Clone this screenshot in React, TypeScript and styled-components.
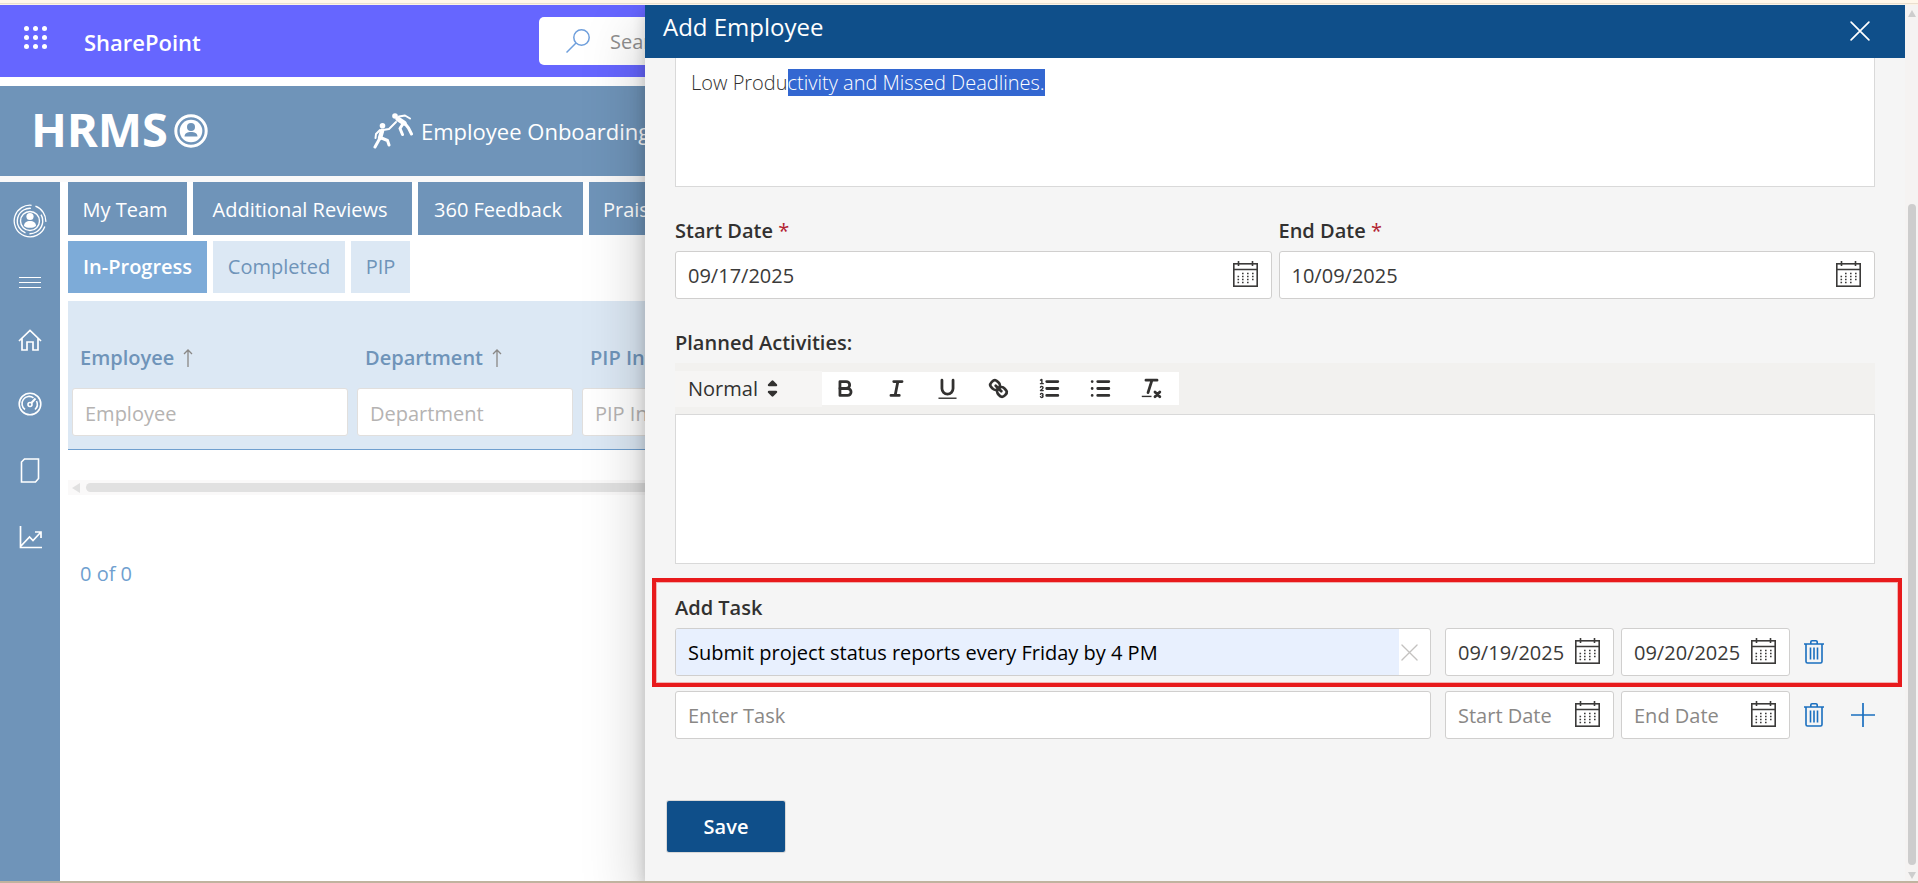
import React from 'react';
import type { ReactNode } from 'react';
import styled, { createGlobalStyle, css } from 'styled-components';

const steel = '#6f94b9';
const navy = '#0f4f8a';
const ink = '#323130';
const azure = '#1a6fbf';

const GlobalStyle = createGlobalStyle`
  *, *::before, *::after { box-sizing: border-box; }
  body { margin: 0; background: #fff; }
  body, button, input, select {
    font-family: "Open Sans", "Noto Sans", sans-serif;
    font-size: 20px;
    line-height: 28px;
    color: ${ink};
  }
  button { background: none; border: 0; padding: 0; cursor: pointer; }
  svg { display: block; flex: none; }
`;

const Frame = styled.div`
  display: flex;
  flex-direction: column;
  min-height: 100vh;
  overflow: hidden;
`;
const TopStrip = styled.div`
  height: 5px;
  background: linear-gradient(#fff7ea 3px, #eadfcf 3px, #eadfcf 4px, #fbf3e6 4px);
`;
const BottomStrip = styled.div`
  height: 2px;
  background: #c0b39f;
`;
const Workspace = styled.div`
  position: relative;
  flex: 1;
  display: flex;
  flex-direction: column;
`;

/* ---------- page behind the drawer ---------- */
const SuiteBar = styled.header`
  display: flex;
  align-items: center;
  height: 72px;
  padding: 0 24px;
  background: #6666ff;
`;
const Waffle = styled.button`
  display: flex;
  align-items: center;
  height: 40px;
  padding-bottom: 6px;
`;
const SuiteName = styled.a`
  flex: 0 0 455px;
  margin-left: 36px;
  padding-top: 2px;
  font-size: 22px;
  font-weight: 600;
  color: #fff;
  text-decoration: none;
`;
const SearchBox = styled.label`
  flex: 1;
  max-width: 840px;
  display: flex;
  align-items: center;
  gap: 20px;
  height: 48px;
  padding: 0 27px;
  border-radius: 5px;
  background: #fff;
  input {
    flex: 1;
    padding: 2px 0 0;
    border: 0;
    outline: 0;
    background: none;
  }
  input::placeholder { color: #8f8f8f; opacity: 1; }
`;
const SiteHeader = styled.div`
  display: flex;
  align-items: center;
  height: 90px;
  margin-top: 9px;
  padding: 0 31px;
  background: ${steel};
  color: #fff;
`;
const Logo = styled.a`
  flex: 0 0 342px;
  display: flex;
  align-items: center;
  gap: 6px;
  color: #fff;
  font-family: "Noto Sans", "Open Sans", sans-serif;
  font-size: 47px;
  line-height: 60px;
  font-weight: 700;
  text-decoration: none;
  span { padding-bottom: 4px; }
`;
const HeaderLink = styled.a`
  display: flex;
  align-items: center;
  gap: 8px;
  font-size: 22px;
  color: #fff;
  text-decoration: none;
  white-space: nowrap;
`;
const Below = styled.div`
  flex: 1;
  display: flex;
  border-top: 6px solid #faf9f9;
`;
const SideBar = styled.nav`
  flex: 0 0 60px;
  display: flex;
  flex-direction: column;
  padding-top: 6px;
  background: ${steel};
`;
const SideItem = styled.button<{ $height: number }>`
  display: flex;
  align-items: center;
  justify-content: center;
  height: ${(p) => p.$height}px;
  color: #fff;
`;
const Content = styled.main`
  flex: 1;
  min-width: 0;
  padding-left: 8px;
`;
const TabRow = styled.div`
  display: flex;
  gap: 6px;
  margin-bottom: 6px;
`;
const Tab = styled.button<{ $width: number }>`
  width: ${(p) => p.$width}px;
  height: 53px;
  padding: 2px 5px 0 0;
  background: ${steel};
  color: #fff;
  white-space: nowrap;
`;
const SubTab = styled(Tab)<{ $active?: boolean }>`
  height: 52px;
  padding: 0;
  background: ${(p) => (p.$active ? '#7dabd8' : '#dce8f4')};
  color: ${(p) => (p.$active ? '#fff' : steel)};
  font-weight: ${(p) => (p.$active ? 600 : 400)};
`;
const Grid = styled.table`
  width: 100%;
  margin-top: 8px;
  border-collapse: separate;
  border-spacing: 0;
  table-layout: fixed;
  background: #dce8f4;
  th {
    height: 149px;
    padding: 0 5px 13px 4px;
    vertical-align: bottom;
    border-bottom: 1px solid #6f9fcf;
    text-align: left;
    font-weight: 600;
    color: ${steel};
  }
`;
const HeadLabel = styled.label`
  display: flex;
  align-items: center;
  gap: 9px;
  padding: 0 8px;
  margin-bottom: 16px;
  white-space: nowrap;
`;
const FilterInput = styled.input`
  display: block;
  width: 100%;
  height: 48px;
  padding: 2px 12px 0;
  border: 1px solid #e1dfdd;
  border-radius: 3px;
  background: #fff;
  &::placeholder { color: #b5b3b2; opacity: 1; }
`;
const HScroll = styled.div`
  display: flex;
  align-items: center;
  gap: 6px;
  height: 15px;
  margin-top: 30px;
  padding-left: 4px;
  background: #faf9f9;
`;
const HThumb = styled.div`
  flex: 1;
  height: 9px;
  border-radius: 5px;
  background: #e1e1e1;
`;
const Count = styled.p`
  margin: 65px 12px 0;
  color: #6f9fcf;
`;

/* ---------- drawer ---------- */
const Drawer = styled.section`
  position: absolute;
  inset: 0 0 0 645px;
  display: flex;
  background: #f5f5f5;
  box-shadow: 0 26px 58px rgba(0, 0, 0, 0.22), 0 5px 14px rgba(0, 0, 0, 0.18);
  clip-path: inset(0 0 0 -140px);
`;
const DrawerMain = styled.div`
  flex: 1;
  min-width: 0;
  display: flex;
  flex-direction: column;
`;
const DrawerHead = styled.header`
  display: flex;
  align-items: center;
  justify-content: space-between;
  height: 53px;
  padding: 0 35px 2px 18px;
  background: ${navy};
  color: #fff;
  h2 {
    margin: 0;
    padding-bottom: 8px;
    font-size: 24px;
    font-weight: 400;
  }
  button { color: #fff; }
`;
const Form = styled.form`
  display: flex;
  flex-direction: column;
  gap: 29px;
  padding: 0 30px;
`;
const Field = styled.div`
  display: flex;
  flex-direction: column;
  gap: 5px;
  min-width: 0;
`;
const Label = styled.label`
  line-height: 30px;
  font-weight: 600;
  span { color: #b22230; font-weight: 400; }
`;
const TextArea = styled.div<{ $joined?: boolean }>`
  height: ${(p) => (p.$joined ? 150 : 129)}px;
  padding: 11px 15px;
  border: 1px solid #d9d9d9;
  ${(p) => !p.$joined && css`border-top: 0;`}
  background: #fff;
  font-weight: 300;
  outline: 0;
  mark { background: #3367d1; color: #fff; }
`;
const DatePair = styled.div`
  display: grid;
  grid-template-columns: 1fr 1fr;
  gap: 7px;
`;
const InputBox = styled.div<{ $padRight?: number }>`
  display: flex;
  align-items: center;
  height: 48px;
  padding-right: ${(p) => p.$padRight ?? 13}px;
  border: 1px solid #d0cfce;
  border-radius: 3px;
  background: #fff;
  overflow: hidden;
`;
const TextInput = styled.input<{ $filled?: boolean }>`
  flex: 1;
  min-width: 0;
  height: 100%;
  padding: 0 0 0 12px;
  border: 0;
  outline: 0;
  background: ${(p) => (p.$filled ? '#e8f0fe' : 'transparent')};
  color: ${(p) => (p.$filled ? '#000' : '#3b3a39')};
  &::placeholder { color: #8a8886; opacity: 1; }
`;
const CalendarButton = styled.button`
  padding-bottom: 2px;
`;
const Toolbar = styled.div`
  display: flex;
  align-items: center;
  height: 51px;
  background: #f2f1ef;
`;
const FormatPicker = styled.div`
  display: flex;
  align-items: center;
  width: 147px;
  height: 36px;
  padding-left: 13px;
  background: #f6f5f4;
  select {
    appearance: none;
    width: 72px;
    padding: 0;
    border: 0;
    background: none;
    outline: 0;
    font-weight: 500;
  }
`;
const ToolGroup = styled.div`
  display: flex;
  height: 33px;
  background: #fff;
  button {
    display: flex;
    align-items: center;
    justify-content: center;
    width: 51px;
    padding-right: 4px;
  }
`;
const Editor = styled.div`
  display: flex;
  flex-direction: column;
`;
const Tasks = styled.div`
  display: flex;
  flex-direction: column;
  gap: 15px;
`;
const TaskField = styled(Field)`
  position: relative;
`;
const Highlight = styled.div`
  position: absolute;
  inset: -15px -27px -11px -23px;
  border: 4px solid #e81a1c;
  box-shadow: inset 0 0 0 1px rgba(232, 26, 28, 0.3);
  pointer-events: none;
`;
const TaskLine = styled.div`
  display: flex;
  align-items: center;
  gap: 14px;
  > :first-child { flex: 1; }
`;
const TaskDates = styled.div`
  display: grid;
  grid-template-columns: 169px 169px;
  gap: 7px;
`;
const Actions = styled.div`
  display: flex;
  align-items: center;
  gap: 27px;
  width: 71px;
  button { color: ${azure}; }
`;
const ClearButton = styled.button`
  margin-left: 2px;
  color: #c4c2c0;
`;
const Footer = styled.footer`
  padding: 62px 22px 28px;
`;
const SaveButton = styled.button`
  width: 118px;
  height: 51px;
  border-radius: 2px;
  background: ${navy};
  color: #fff;
  font-weight: 600;
  box-shadow: 0 0 0 1px #d8d8d8;
`;
const VScroll = styled.div`
  flex: 0 0 13px;
  display: flex;
  flex-direction: column;
  align-items: center;
  gap: 7px;
  padding: 5px 0 2px;
  background: #f5f3f2;
`;
const VTrack = styled.div`
  flex: 1;
  display: flex;
  padding-top: 180px;
`;
const VThumb = styled.div`
  width: 8px;
  border-radius: 4px;
  background: #cdcdcd;
`;

/* ---------- icons ---------- */
const CalendarIcon = () => (
  <svg width="25" height="26" viewBox="0 0 25 26" fill="none" stroke="#3b3a39">
    <rect x="0.800" y="2.800" width="23.400" height="22.400" strokeWidth="1.600" />
    <path d="M1 8.500h23M5.500 0v5M19.500 0v5" strokeWidth="1.600" />
    <path d="M9 12.500h1.600M14 12.500h1.600M19 12.500h1.600M4.500 15.500h1.600M9 15.500h1.600M14 15.500h1.600M19 15.500h1.600M4.500 18.500h1.600M9 18.500h1.600M14 18.500h1.600M19 18.500h1.600M4.500 21.500h1.600M9 21.500h1.600M14 21.500h1.600" strokeWidth="1.400" />
  </svg>
);
const TrashIcon = () => (
  <svg width="20" height="24" viewBox="0 0 20 24" fill="none" stroke="currentColor" strokeWidth="1.600">
    <path d="M0 4h20M2 4v17.500a1.500 1.500 0 0 0 1.500 1.500h13a1.500 1.500 0 0 0 1.500-1.500V4M6.800 4V2a1.200 1.200 0 0 1 1.200-1.200h4a1.200 1.200 0 0 1 1.200 1.200v2M6.500 7.500v12M10 7.500v12M13.500 7.500v12" />
  </svg>
);
const PlusIcon = () => (
  <svg width="24" height="24" viewBox="0 0 24 24" stroke="currentColor" strokeWidth="1.700">
    <path d="M12 0v24M0 12h24" />
  </svg>
);
const CrossIcon = ({ size, width }: { size: number; width: number }) => (
  <svg width={size} height={size} viewBox="0 0 18 18" stroke="currentColor" strokeWidth={width} strokeLinecap="round">
    <path d="M1 1l16 16M17 1L1 17" />
  </svg>
);
const SortIcon = () => (
  <svg width="10" height="20" viewBox="0 0 10 20" fill="none" stroke="#8a8886" strokeWidth="1.300">
    <path d="M5 19V2M1 6l4-4 4 4" />
  </svg>
);
const ToolIcon = ({ children }: { children: ReactNode }) => (
  <svg width="25" height="25" viewBox="0 0 18 18" fill="none" stroke={ink} strokeWidth="2" strokeLinecap="round" strokeLinejoin="round">
    {children}
  </svg>
);

const tools: { name: string; icon: ReactNode }[] = [
  {
    name: 'Bold',
    icon: (
      <>
        <path d="M5 4h4.500a2.500 2.500 0 0 1 0 5H5z" />
        <path d="M5 9h5.500a2.500 2.500 0 0 1 0 5H5z" />
      </>
    ),
  },
  { name: 'Italic', icon: <path d="M7 4h6M5 14h6M8 14l2-10" /> },
  {
    name: 'Underline',
    icon: (
      <>
        <path d="M5 3V9a4 4 0 0 0 8 0V3" />
        <path strokeWidth="1" strokeLinecap="butt" d="M2.500 16h13" />
      </>
    ),
  },
  {
    name: 'Link',
    icon: (
      <>
        <path d="M7 7l4 4" />
        <path d="M8.900 4.577a3.476 3.476 0 0 1 .36 4.679A3.476 3.476 0 0 1 4.577 8.900C3.185 7.500 2.035 6.400 4.217 4.217S7.500 3.185 8.900 4.577Z" />
        <path d="M13.423 9.100a3.476 3.476 0 0 0-4.679-.36 3.476 3.476 0 0 0 .36 4.679c1.392 1.392 2.500 2.542 4.679.36S14.815 10.500 13.423 9.100Z" />
      </>
    ),
  },
  {
    name: 'Numbered list',
    icon: (
      <>
        <path d="M7 4h8M7 9h8M7 14h8" />
        <path strokeWidth="1" d="M2.500 3l1-.5v3M2.500 5.500h2M4.500 10.500h-2c0-.234 1.850-1.076 1.850-2.234A.959.959 0 0 0 2.500 8.156M2.500 14.846a.959.959 0 0 0 1.850-.109A.7.7 0 0 0 3.750 14a.688.688 0 0 0 .6-.736.959.959 0 0 0-1.850-.109" />
      </>
    ),
  },
  { name: 'Bulleted list', icon: <path d="M7 4h8M7 9h8M7 14h8M3 4h0M3 9h0M3 14h0" /> },
  {
    name: 'Clear formatting',
    icon: (
      <>
        <path d="M5 3h8M6.500 12L9.350 3" />
        <path d="M11.500 11.500l3.500 3.500M15 11.500L11.500 15" />
        <path strokeWidth="1" strokeLinecap="butt" d="M2 14.700h7" />
      </>
    ),
  },
];

const sideItems: { name: string; height: number; icon: ReactNode }[] = [
  {
    name: 'Profile',
    height: 66,
    icon: (
      <svg width="34" height="34" viewBox="0 0 34 34" fill="none" stroke="#fff">
        <circle cx="17" cy="17" r="9.500" strokeWidth="1.400" />
        <circle cx="17" cy="17" r="12.700" strokeWidth="1.400" strokeDasharray="27 4 36 13" transform="rotate(-30 17 17)" />
        <circle cx="17" cy="17" r="15.800" strokeWidth="1.300" strokeDasharray="70 4 20 5" transform="rotate(20 17 17)" />
        <circle cx="17" cy="12.500" r="3.600" fill="#fff" stroke="none" />
        <path d="M11 22c0-3.400 2.500-5 6-5s6 1.600 6 5c-1.500 1.300-3.500 1.800-6 1.800s-4.500-.5-6-1.800z" fill="#fff" stroke="none" />
      </svg>
    ),
  },
  {
    name: 'Menu',
    height: 58,
    icon: (
      <svg width="22" height="12" viewBox="0 0 22 12" stroke="#fff" strokeWidth="1">
        <path d="M0 .5h22M0 5.500h22M0 10.500h22" />
      </svg>
    ),
  },
  {
    name: 'Home',
    height: 56,
    icon: (
      <svg width="24" height="22" viewBox="0 0 24 22" fill="none" stroke="#fff" strokeWidth="1.700">
        <path d="M1 12L12 1.500 23 12M4 9.500V21h5v-8h6v8h5V9.500" />
      </svg>
    ),
  },
  {
    name: 'Dashboard',
    height: 72,
    icon: (
      <svg width="24" height="24" viewBox="0 0 24 24" fill="none" stroke="#fff" strokeWidth="1.600">
        <circle cx="12" cy="12" r="10.800" />
        <path d="M7 17.500a7.200 7.200 0 0 1 8.500-11.700M18.500 9a7.200 7.200 0 0 1-1.500 8.500" />
        <circle cx="12" cy="12.500" r="2" />
        <path d="M13.300 11L17.500 6.500" strokeWidth="2" />
      </svg>
    ),
  },
  {
    name: 'Documents',
    height: 60,
    icon: (
      <svg width="20" height="25" viewBox="0 0 20 25" fill="none" stroke="#fff" strokeWidth="1.600">
        <path d="M4.500 1H18.500v19.500L15.500 24H1.500V4z" />
      </svg>
    ),
  },
  {
    name: 'Reports',
    height: 74,
    icon: (
      <svg width="23" height="23" viewBox="0 0 23 23" fill="none" stroke="#fff" strokeWidth="1.700">
        <path d="M1.500 0v21.500H23M2 20l8.500-9 3.500 3.500 7.500-8M16 6h6v6" />
      </svg>
    ),
  },
];

const SearchIcon = () => (
  <svg width="24" height="24" viewBox="0 0 24 24" fill="none" stroke="#6f9fdc" strokeWidth="1.500">
    <circle cx="15.500" cy="8.500" r="7.700" />
    <path d="M10 14L.5 23.500" />
  </svg>
);
const LogoMark = () => (
  <svg width="34" height="34" viewBox="0 0 34 34">
    <circle cx="17" cy="17" r="15.200" fill="none" stroke="#fff" strokeWidth="3" />
    <circle cx="17" cy="17" r="11.300" fill="#fff" />
    <circle cx="17" cy="13" r="4" fill={steel} />
    <path d="M10.500 22.500c.3-3.500 3-4.500 6.500-4.500s6.200 1 6.500 4.500z" fill={steel} />
  </svg>
);
const ClimbersIcon = () => (
  <svg width="40" height="36" viewBox="0 0 40 36" fill="none" stroke="#fff" strokeLinecap="round" strokeLinejoin="round">
    <circle cx="9.500" cy="12.800" r="2.800" fill="#fff" stroke="none" />
    <circle cx="22" cy="3" r="2.800" fill="#fff" stroke="none" />
    <path d="M9 18l-2 7" strokeWidth="4.500" />
    <path d="M10 17l6-1 7-7M7 17l-4 4-.5 4" strokeWidth="2" />
    <path d="M7 25l-5 9M8.500 25l6 2.500 1.500 4.500" strokeWidth="3" />
    <path d="M25 6l6 4" strokeWidth="5" />
    <path d="M26 3.500l6-1 5 3" strokeWidth="2" />
    <path d="M31.500 10l4 5 3 6M29.500 11.500l-2.500 4 2.500 6" strokeWidth="3" />
  </svg>
);

/* ---------- composed parts ---------- */
interface DateFieldProps {
  id: string;
  value?: string;
  placeholder?: string;
  label?: string;
}
const DateField = ({ id, value, placeholder, label }: DateFieldProps) => (
  <InputBox>
    <TextInput id={id} type="text" defaultValue={value} placeholder={placeholder} aria-label={label} />
    <CalendarButton type="button" aria-label="Open calendar">
      <CalendarIcon />
    </CalendarButton>
  </InputBox>
);

interface TaskRowProps {
  id: string;
  task?: string;
  start?: string;
  end?: string;
  canAdd?: boolean;
}
const TaskRow = ({ id, task, start, end, canAdd }: TaskRowProps) => (
  <TaskLine>
    <InputBox $padRight={task ? 12 : 0}>
      <TextInput id={id} type="text" $filled={!!task} defaultValue={task} placeholder="Enter Task" aria-label="Task" />
      {task && (
        <ClearButton type="button" aria-label="Clear task">
          <CrossIcon size={17} width={1.400} />
        </ClearButton>
      )}
    </InputBox>
    <TaskDates>
      <DateField id={`${id}-start`} value={start} placeholder="Start Date" label="Task start date" />
      <DateField id={`${id}-end`} value={end} placeholder="End Date" label="Task end date" />
    </TaskDates>
    <Actions>
      <button type="button" aria-label="Delete task">
        <TrashIcon />
      </button>
      {canAdd && (
        <button type="button" aria-label="Add task">
          <PlusIcon />
        </button>
      )}
    </Actions>
  </TaskLine>
);

const columns = [
  { id: 'employee', name: 'Employee', width: 285, sorted: true },
  { id: 'department', name: 'Department', width: 225, sorted: true },
  { id: 'pip', name: 'PIP Info', width: 240, sorted: false },
];

export default function App() {
  return (
    <Frame>
      <GlobalStyle />
      <TopStrip />
      <Workspace>
        <SuiteBar>
          <Waffle aria-label="App launcher">
            <svg width="24" height="24" viewBox="0 0 24 24" fill="#fff">
              {[2.5, 11.5, 20.5].map((y) => [2.5, 11.5, 20.5].map((x) => <circle key={`${x}-${y}`} cx={x} cy={y} r="2.500" />))}
            </svg>
          </Waffle>
          <SuiteName href="#">SharePoint</SuiteName>
          <SearchBox>
            <SearchIcon />
            <input type="text" placeholder="Search" aria-label="Search" />
          </SearchBox>
        </SuiteBar>
        <SiteHeader>
          <Logo href="#">
            <span>HRMS</span>
            <LogoMark />
          </Logo>
          <HeaderLink href="#">
            <ClimbersIcon />
            Employee Onboarding
          </HeaderLink>
        </SiteHeader>
        <Below>
          <SideBar>
            {sideItems.map((item) => (
              <SideItem key={item.name} $height={item.height} aria-label={item.name}>
                {item.icon}
              </SideItem>
            ))}
          </SideBar>
          <Content>
            <TabRow>
              <Tab $width={119}>My Team</Tab>
              <Tab $width={219}>Additional Reviews</Tab>
              <Tab $width={165}>360 Feedback</Tab>
              <Tab $width={90}>Praise</Tab>
            </TabRow>
            <TabRow>
              <SubTab $width={139} $active>
                In-Progress
              </SubTab>
              <SubTab $width={132}>Completed</SubTab>
              <SubTab $width={59}>PIP</SubTab>
            </TabRow>
            <Grid>
              <colgroup>
                {columns.map((c) => (
                  <col key={c.id} width={c.width} />
                ))}
                <col />
              </colgroup>
              <thead>
                <tr>
                  {columns.map((c) => (
                    <th key={c.id} scope="col">
                      <HeadLabel htmlFor={`filter-${c.id}`}>
                        {c.name}
                        {c.sorted && <SortIcon />}
                      </HeadLabel>
                      <FilterInput id={`filter-${c.id}`} type="text" placeholder={c.name} />
                    </th>
                  ))}
                  <th aria-hidden="true" />
                </tr>
              </thead>
            </Grid>
            <HScroll>
              <svg width="8" height="10" viewBox="0 0 8 10" fill="#e1e1e1">
                <path d="M8 0v10L0 5z" />
              </svg>
              <HThumb />
            </HScroll>
            <Count>0 of 0</Count>
          </Content>
        </Below>

        <Drawer role="dialog" aria-label="Add Employee">
          <DrawerMain>
            <DrawerHead>
              <h2>Add Employee</h2>
              <button type="button" aria-label="Close">
                <CrossIcon size={20} width={1.500} />
              </button>
            </DrawerHead>
            <Form>
              <TextArea contentEditable suppressContentEditableWarning role="textbox" aria-label="Reason">
                Low Produ<mark>ctivity and Missed Deadlines.</mark>
              </TextArea>
              <DatePair>
                <Field>
                  <Label htmlFor="start">
                    Start Date <span>*</span>
                  </Label>
                  <DateField id="start" value="09/17/2025" />
                </Field>
                <Field>
                  <Label htmlFor="end">
                    End Date <span>*</span>
                  </Label>
                  <DateField id="end" value="10/09/2025" />
                </Field>
              </DatePair>
              <Field>
                <Label as="div" id="planned-label">
                  Planned Activities:
                </Label>
                <Editor>
                  <Toolbar>
                    <FormatPicker>
                      <select aria-label="Text style">
                        <option>Normal</option>
                      </select>
                      <svg width="25" height="25" viewBox="0 0 18 18" fill={ink} stroke={ink} strokeWidth="1.800" strokeLinejoin="round">
                        <path d="M6.500 11.500L9 14l2.500-2.500zM6.500 6.500L9 4l2.500 2.500z" />
                      </svg>
                    </FormatPicker>
                    <ToolGroup>
                      {tools.map((t) => (
                        <button key={t.name} type="button" aria-label={t.name}>
                          <ToolIcon>{t.icon}</ToolIcon>
                        </button>
                      ))}
                    </ToolGroup>
                  </Toolbar>
                  <TextArea $joined contentEditable suppressContentEditableWarning role="textbox" aria-labelledby="planned-label" />
                </Editor>
              </Field>
              <Tasks>
                <TaskField>
                  <Label htmlFor="task-1">Add Task</Label>
                  <TaskRow id="task-1" task="Submit project status reports every Friday by 4 PM" start="09/19/2025" end="09/20/2025" />
                  <Highlight />
                </TaskField>
                <TaskRow id="task-2" canAdd />
              </Tasks>
            </Form>
            <Footer>
              <SaveButton type="button">Save</SaveButton>
            </Footer>
          </DrawerMain>
          <VScroll>
            <svg width="8" height="7" viewBox="0 0 8 7" fill="#cdcdcd">
              <path d="M4 0l4 7H0z" />
            </svg>
            <VTrack>
              <VThumb />
            </VTrack>
            <svg width="8" height="7" viewBox="0 0 8 7" fill="#cdcdcd">
              <path d="M4 7l4-7H0z" />
            </svg>
          </VScroll>
        </Drawer>
      </Workspace>
      <BottomStrip />
    </Frame>
  );
}
